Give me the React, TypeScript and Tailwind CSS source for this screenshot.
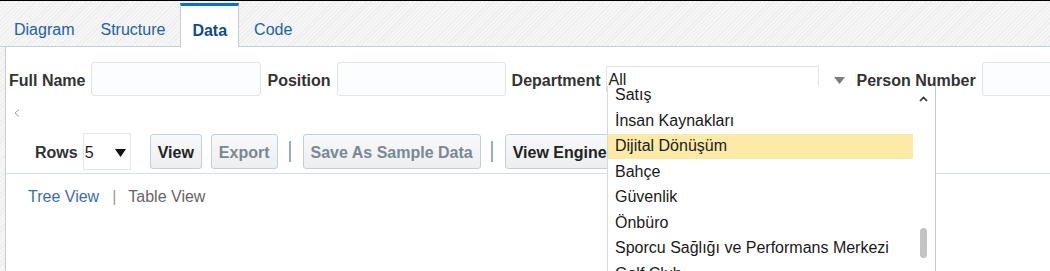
import React from 'react'

const departments = [
  'Satış',
  'İnsan Kaynakları',
  'Dijital Dönüşüm',
  'Bahçe',
  'Güvenlik',
  'Önbüro',
  'Sporcu Sağlığı ve Performans Merkezi',
  'Golf Club',
]

const tabs = ['Diagram', 'Structure', 'Data', 'Code']

function TextInput({ width }: { width: string }) {
  return <div className={`${width} h-[34px] shrink-0 rounded-[3px] border border-[#dfe4e7] bg-[#fcfdfe]`} />
}

function Btn({ label, disabled }: { label: string; disabled?: boolean }) {
  return (
    <div
      className={`h-[35px] shrink-0 rounded-[3px] border border-[#c4ced7] bg-gradient-to-b from-[#f8f9fa] to-[#eceef0] px-[7px] pt-[3px] flex items-center font-bold text-[16px] ${
        disabled ? 'text-[#7b8793]' : 'text-[#222]'
      }`}
    >
      {label}
    </div>
  )
}

function Sep() {
  return <div className="w-[2px] h-[21px] shrink-0 bg-[#9aabbc]" />
}

export default function App() {
  return (
    <div className="relative w-[1050px] h-[271px] overflow-hidden font-['Liberation_Sans',Arial,sans-serif] bg-[repeating-linear-gradient(135deg,#f6f6f6_0px,#f6f6f6_2px,#ededed_2px,#ededed_3px)]">
      {/* tab strip */}
      <div className="h-[47px] border-t border-black border-b border-b-[#c4ced7] flex items-end pl-[1px]">
        {tabs.map(t =>
          t === 'Data' ? (
            <div
              key={t}
              className="h-[44px] -mb-[1px] ml-[2px] mr-[2px] px-[11px] pt-[9px] flex items-center bg-white border-t-[3px] border-t-[#0572ce] border-x border-x-[#c4ced7] font-bold text-[16px] text-[#0d4c8c]"
            >
              {t}
            </div>
          ) : (
            <div key={t} className="h-[44px] px-[13px] pt-[12px] flex items-center text-[16px] text-[#1b62a8]">
              {t}
            </div>
          )
        )}
      </div>

      {/* panel */}
      <div className="ml-[5px] h-[224px] bg-white border-l border-[#c4ced7]">
        <div className="pt-[15px] pl-[3px] flex items-center h-[49px] text-[16px] text-[#333]">
          <span className="font-bold mr-[6px] pt-[3px] whitespace-nowrap">Full Name</span>
          <TextInput width="w-[170px]" />
          <span className="font-bold ml-[6px] mr-[6px] pt-[3px] whitespace-nowrap">Position</span>
          <TextInput width="w-[169px]" />
          <span className="font-bold ml-[6px] mr-[6px] pt-[3px] whitespace-nowrap">Department</span>
          <div className="w-[213px] h-[26px] shrink-0 border border-[#dfe4e7] flex items-center pl-[1px] pt-[2px] text-[16px] text-[#222]">
            All
          </div>
          <svg width="11" height="7" viewBox="0 0 11 7" className="ml-[15px] mt-[2px] shrink-0">
            <polygon points="0,0 11,0 5.5,7" fill="#7d7d7d" />
          </svg>
          <span className="font-bold ml-[11px] mr-[6px] pt-[3px] whitespace-nowrap">Person Number</span>
          <TextInput width="w-[170px]" />
        </div>

        <div className="h-[37px] pl-[8px] pt-[13px]">
          <svg width="6" height="8" viewBox="0 0 6 8">
            <polyline points="5,0.5 1,4 5,7.5" fill="none" stroke="#a0a0a0" strokeWidth="1" />
          </svg>
        </div>

        <div className="h-[37px] flex items-center pl-[29px]">
          <span className="font-bold text-[16px] text-[#333] mr-[5px] pt-[3px]">Rows</span>
          <div className="w-[48px] h-[37px] shrink-0 border border-[#e3e7ea] flex items-center justify-between pl-[1px] pr-[4px] pt-[2px] text-[16px] text-[#222]">
            <span>5</span>
            <svg width="11" height="8" viewBox="0 0 11 8">
              <polygon points="0,0 11,0 5.5,8" fill="#111" />
            </svg>
          </div>
          <div className="ml-[19px]">
            <Btn label="View" />
          </div>
          <div className="ml-[9px]">
            <Btn label="Export" disabled />
          </div>
          <div className="ml-[11px] mr-[12px]">
            <Sep />
          </div>
          <Btn label="Save As Sample Data" disabled />
          <div className="ml-[10px] mr-[12px]">
            <Sep />
          </div>
          <Btn label="View Engine" />
        </div>

        <div className="mt-[3px] border-t border-[#d6dfe6] pt-[14px] pl-[22px] flex items-center text-[16px] leading-[18px]">
          <span className="text-[#3a6db5]">Tree View</span>
          <span className="ml-[13px] mr-[12px] text-[#9a9a9a]">|</span>
          <span className="text-[#666]">Table View</span>
        </div>
      </div>

      {/* open department list */}
      <div className="absolute left-[607px] top-[86px] bottom-0 w-[329px] bg-white border-l border-l-[#d9d9d9] border-r border-r-[#c8c8c8] overflow-hidden">
        <div className="-mt-[3.5px] w-[305px]">
          {departments.map(d => (
            <div
              key={d}
              className={`h-[25.5px] flex items-center px-[7px] text-[16px] text-[#1a1a1a] whitespace-nowrap ${
                d === 'Dijital Dönüşüm' ? 'bg-[#fdeaa7]' : ''
              }`}
            >
              {d}
            </div>
          ))}
        </div>
        <svg width="9" height="6" viewBox="0 0 9 6" className="absolute left-[311px] top-[10px]">
          <polyline points="1,5 4.5,1.5 8,5" fill="none" stroke="#333" strokeWidth="1.6" />
        </svg>
        <div className="absolute left-[312px] top-[142px] w-[7px] h-[30px] rounded-[4px] bg-[#c3c3c3]" />
      </div>
    </div>
  )
}
